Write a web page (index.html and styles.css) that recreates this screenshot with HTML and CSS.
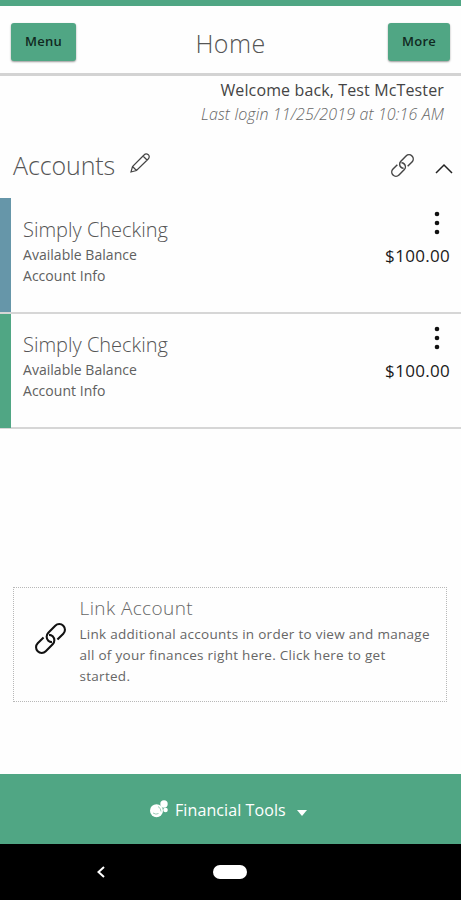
FILE: index.html
```
<!DOCTYPE html>
<html lang="en">
<head>
<meta charset="utf-8">
<title>Home</title>
<link rel="stylesheet" href="styles.css">
</head>
<body>
<svg class="defs" width="0" height="0">
  <symbol id="link" viewBox="0 0 30 30">
    <g fill="none" stroke="currentColor" transform="translate(15 15) rotate(-45)">
      <path d="M4 5.500H12A5.500 5.500 0 0 0 12 -5.500H2.500A5.500 5.500 0 0 0 -3 0Q-3 2 -1.500 3.500"/>
      <path d="M-4 -5.500H-12A5.500 5.500 0 0 0 -12 5.500H-2.500A5.500 5.500 0 0 0 3 0Q3 -2 1.500 -3.500"/>
    </g>
  </symbol>
</svg>
<div class="screen">
  <header class="topbar">
    <button class="btn">Menu</button>
    <h1 class="title">Home</h1>
    <button class="btn">More</button>
  </header>
  <section class="welcome">
    <p class="greeting">Welcome back, Test McTester</p>
    <p class="login">Last login 11/25/2019 at 10:16 AM</p>
  </section>
  <div class="accounts-head">
    <h2 class="section-title">Accounts</h2>
    <svg class="pencil" viewBox="0 0 20 20"><path d="M1 19L2.500 13.500L14 2Q16-.2 18.300 1.700Q20.300 4 18 6.200L6.500 17.500ZM2.500 13.500L6.500 17.500M13 3L17 7"/></svg>
    <svg class="link-small"><use href="#link"/></svg>
    <svg class="chevron" viewBox="0 0 18 11"><path d="M1 10L9 2L17 10"/></svg>
  </div>
  <article class="account blue">
    <div class="info">
      <h3 class="name">Simply Checking</h3>
      <p class="detail">Available Balance</p>
      <p class="detail">Account Info</p>
    </div>
    <div class="side">
      <svg class="dots" viewBox="0 0 6 24"><circle cx="3" cy="3" r="2.300"/><circle cx="3" cy="12" r="2.300"/><circle cx="3" cy="21" r="2.300"/></svg>
      <span class="amount">$100.00</span>
    </div>
  </article>
  <article class="account green">
    <div class="info">
      <h3 class="name">Simply Checking</h3>
      <p class="detail">Available Balance</p>
      <p class="detail">Account Info</p>
    </div>
    <div class="side">
      <svg class="dots" viewBox="0 0 6 24"><circle cx="3" cy="3" r="2.300"/><circle cx="3" cy="12" r="2.300"/><circle cx="3" cy="21" r="2.300"/></svg>
      <span class="amount">$100.00</span>
    </div>
  </article>
  <a class="link-card">
    <svg class="link-large"><use href="#link"/></svg>
    <div>
      <h3 class="card-title">Link Account</h3>
      <p class="card-text">Link additional accounts in order to view and manage<br>all of your finances right here. Click here to get<br>started.</p>
    </div>
  </a>
  <footer class="tools">
    <svg class="coins" viewBox="0 0 18 18"><circle cx="6.500" cy="10.700" r="6.500"/><circle cx="14" cy="4" r="3.700"/><circle cx="15.500" cy="10" r="2.300"/><path d="M8 6.500Q11 8 11 11.500M3 13Q6 15 8.500 13.500"/></svg>
    <span class="tools-label">Financial Tools</span>
    <svg class="caret" viewBox="0 0 10 6"><path d="M0 0H10L5 6Z"/></svg>
  </footer>
  <nav class="system">
    <svg class="back" viewBox="0 0 8 12"><path d="M7 1L1.500 6L7 11"/></svg>
    <span class="pill"></span>
  </nav>
</div>
</body>
</html>
```
FILE: styles.css
```
* { box-sizing: border-box; }
body { margin: 0; background: #fefefe; font-family: "Open Sans", sans-serif; color: #555; }
h1, h2, h3, p { margin: 0; font-weight: 300; white-space: nowrap; }
svg { display: block; flex: none; }
.defs { position: absolute; }
.screen { display: flex; flex-direction: column; width: 461px; height: 900px; overflow: hidden; }
.topbar { height: 76px; border-top: 6px solid #50a684; border-bottom: 3px solid #d3d3d3; padding: 17px 11px 0; display: grid; grid-template-columns: 65px 1fr 62px; }
.btn { height: 38px; border: 0; border-radius: 3px; padding: 0 0 2px; background: #50a684; color: #10291f; font: 600 13px "Open Sans", sans-serif; letter-spacing: .3px; box-shadow: 0 1px 2px #0006; }
.title { font-size: 25px; line-height: 40px; letter-spacing: .4px; text-align: center; color: #555; padding-right: 3px; }
.welcome { height: 67px; padding: 3px 17px 0 0; text-align: right; }
.greeting { font-size: 16px; line-height: 23px; letter-spacing: .13px; font-weight: 400; color: #444; }
.login { font-size: 16px; line-height: 24px; letter-spacing: .14px; font-style: italic; color: #666; }
.accounts-head { height: 55px; padding: 0 8px 0 13px; display: flex; align-items: flex-start; }
.section-title { font-size: 25px; line-height: 44px; letter-spacing: -.1px; color: #555; }
.pencil { width: 20px; height: 20px; margin: 10px 0 0 15px; fill: none; stroke: #444; stroke-width: 1.200; }
.link-small { width: 23px; height: 23px; margin: 11px 21px 0 auto; color: #444; stroke-width: 1.900; }
.chevron { width: 18px; height: 11px; margin-top: 20px; fill: none; stroke: #222; stroke-width: 1.500; }
.account { height: 115px; border-bottom: 2px solid #d6d6d6; display: flex; justify-content: space-between; padding: 17px 11px 0 23px; position: relative; }
.account::before { content: ""; position: absolute; left: 0; top: 0; width: 11px; height: 114px; }
.blue::before { background: #6696a9; }
.green::before { background: #50a684; }
.blue { height: 116px; }
.green { padding-top: 16px; }
.green .name { padding-top: 1px; line-height: 28px; }
.name { font-size: 20px; line-height: 29px; color: #555; }
.detail { font-size: 14px; line-height: 21px; letter-spacing: .03px; font-weight: 400; color: #606060; }
.side { display: flex; flex-direction: column; align-items: flex-end; }
.dots { width: 6px; height: 24px; margin: -4px 10px 0 0; fill: #111; }
.amount { font-size: 17px; line-height: 24px; margin-top: 9px; letter-spacing: .3px; font-weight: 500; color: #1a1a1a; }
.link-card { margin: 158px 14px 0 13px; height: 115px; border: 1px dotted #b8b8b8; display: flex; padding: 5px 0 0 20px; }
.link-large { width: 31px; height: 31px; margin: 30px 13.500px 0 1px; color: #111; stroke-width: 2; }
.card-title { font-size: 19px; line-height: 30px; letter-spacing: .4px; color: #666; }
.card-text { font-size: 13.500px; line-height: 21px; letter-spacing: .28px; font-weight: 400; color: #666; padding-top: 1px; }
.tools { height: 70px; margin-top: auto; background: #50a684; display: flex; align-items: center; padding-left: 150px; color: #fff; }
.coins { width: 18px; height: 18px; margin-right: 7px; fill: #fff; stroke: none; }
.coins path { fill: none; stroke: #9bcbb7; stroke-width: 1; }
.tools-label { font-size: 16px; line-height: 24px; letter-spacing: .1px; white-space: nowrap; padding-top: 1px; }
.caret { width: 10px; height: 6px; margin: 7px 0 0 11px; fill: #fff; }
.system { height: 56px; background: #000; display: flex; padding-left: 97px; align-items: center; }
.back { width: 8px; height: 12px; fill: none; stroke: #fff; stroke-width: 2; }
.pill { width: 34px; height: 14px; border-radius: 7px; background: #fff; margin-left: 108px; }
```
